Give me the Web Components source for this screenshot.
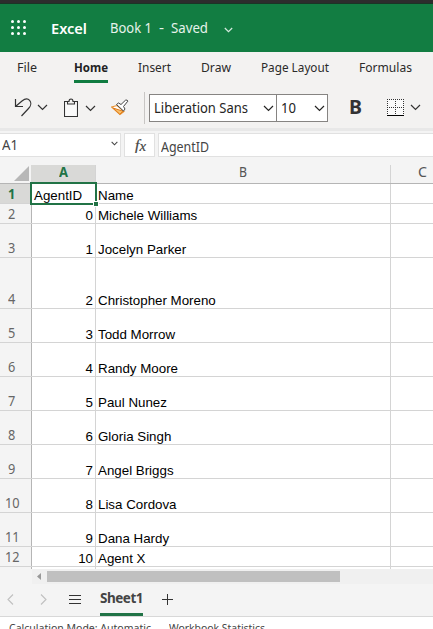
<!DOCTYPE html>
<html lang="en">
<head>
<meta charset="utf-8">
<title>Book 1 - Excel</title>
<style>
html,body{margin:0;height:100%;overflow:hidden}
body{font-family:"Noto Sans","Open Sans",sans-serif;background:#f3f2f1}
</style>
</head>
<body>
<excel-app></excel-app>
<script>
const define=(name,html,init)=>customElements.define(name,class extends HTMLElement{
  connectedCallback(){
    if(this.shadowRoot)return;
    const root=this.attachShadow({mode:'open'});
    const t=document.createElement('template');
    t.innerHTML=typeof html==='function'?html(this):html;
    root.append(t.content.cloneNode(true));
    if(init)init(this,root);
  }
});

// A single line of text, condensed or expanded to the width in its "w" attribute.
define('fit-label',`<style>
:host{display:block;flex:none;white-space:nowrap}
span{display:inline-block;transform-origin:0 50%}
</style><span><slot></slot></span>`,(el,root)=>{
  const s=root.querySelector('span'),w=+el.getAttribute('w');
  el.style.width=w+'px';
  const n=s.getBoundingClientRect().width;
  if(n)s.style.transform=`scaleX(${w/n})`;
});

define('chevron-down',el=>`<style>:host{display:block;flex:none;line-height:0}svg{display:block}</style>
<svg width="${el.getAttribute('w')||11}" height="${el.getAttribute('h')||7}" viewBox="0 0 11 7" fill="none" stroke="currentColor" stroke-width="${el.getAttribute('sw')||1.2}"><path d="M1 1l4.5 4.5L10 1"/></svg>`);

define('title-bar',`<style>
:host{display:flex;height:48px;border-top:4px solid #2d2d2d;background:#127d42;background-clip:padding-box;color:#fff;box-sizing:content-box;align-items:center;padding-left:11px;position:relative}
:host::before{content:"";position:absolute;left:0;right:0;top:-1px;height:1px;background:#1b3526}
fit-label{line-height:24px}
.app{font:600 15px/24px "Noto Sans",sans-serif;margin-left:24px}
.doc{font-size:14px;margin-left:23px;color:#e6f2eb}
.dash{font-size:14px;margin-left:7px;color:#e6f2eb}
.saved{font-size:14px;margin-left:7px;color:#e6f2eb}
chevron-down{margin:3px 0 0 16px;color:#d5eade}
</style>
<svg width="16" height="16" viewBox="0 0 16 16" fill="#fff"><circle cx="1.5" cy="1.5" r="1.5"/><circle cx="7.5" cy="1.5" r="1.5"/><circle cx="13.5" cy="1.5" r="1.5"/><circle cx="1.5" cy="7.5" r="1.5"/><circle cx="7.5" cy="7.5" r="1.5"/><circle cx="13.5" cy="7.5" r="1.5"/><circle cx="1.5" cy="13.5" r="1.5"/><circle cx="7.5" cy="13.5" r="1.5"/><circle cx="13.5" cy="13.5" r="1.5"/></svg>
<fit-label class="app" w="36">Excel</fit-label>
<fit-label class="doc" w="42">Book 1</fit-label><fit-label class="dash" w="5">-</fit-label><fit-label class="saved" w="37">Saved</fit-label>
<chevron-down w="9" h="6" sw="1.5"></chevron-down>`);

define('ribbon-tab',el=>`<style>
:host{display:block;flex:none;font-size:13px;color:#2b2a29}
fit-label{line-height:20px;height:23px;border-bottom:3px solid transparent}
:host([active]) fit-label{font-weight:700;border-color:#107c41;color:#222}
</style><fit-label w="${el.getAttribute('w')}">${el.getAttribute('label')}</fit-label>`);

define('ribbon-tabs',`<style>
:host{display:grid;grid-template-columns:57px 64px 63px 60px 98px auto;height:33px;padding-left:17px;background:#f3f2f1;align-items:end;box-sizing:border-box}
ribbon-tab{margin-bottom:2px}
</style>
<ribbon-tab label="File" w="20"></ribbon-tab><ribbon-tab label="Home" w="34" active></ribbon-tab><ribbon-tab label="Insert" w="33"></ribbon-tab><ribbon-tab label="Draw" w="30"></ribbon-tab><ribbon-tab label="Page Layout" w="68"></ribbon-tab><ribbon-tab label="Formulas" w="53"></ribbon-tab>`);

define('combo-box',`<style>
:host{display:flex;box-sizing:border-box;height:28px;border:1px solid #868482;background:#fff;align-items:center;justify-content:space-between;padding:0 2px 0 4px;font-size:14px;line-height:26px;color:#252423}
</style><slot></slot><chevron-down></chevron-down>`);

define('tool-bar',`<style>
:host{display:flex;height:43px;background:#f3f2f1;color:#333;align-items:flex-start}
svg{display:block;flex:none}
chevron-down{margin-top:19px}
.undo{margin:12px 0 0 14px}.clip{margin:13px 0 0 16px}.brush{margin:14px 0 0 15px}
.sep{width:1px;height:32px;background:#c8c6c4;margin:7px 4px 0 13px}
combo-box{margin-top:9px}
.font{width:128px}.size{width:52px;margin-left:-1px}
.bold{font:700 20px/27px "Noto Sans",sans-serif;margin:8px 0 0 21px}
.border{margin:14px 0 0 25px}
</style>
<svg class="undo" width="18" height="22" viewBox="0 0 18 22" fill="none" stroke="#333" stroke-width="1.2"><path d="M1.500 2v7.500H9M1.500 9.500L8 4c3-2.500 6-2.500 7.600-.7C17.500 5.500 17 9 14.500 11.500L7.500 19"/></svg>
<chevron-down style="margin-left:5px"></chevron-down>
<svg class="clip" width="14" height="20" viewBox="0 0 14 20" fill="none" stroke="#333" stroke-width="1.1"><path fill="#fafafa" d="M.5 3.500h13v15H.5z"/><path fill="#f3f2f1" d="M3.500 6V3.500H5C5 .2 9 .2 9 3.500h1.500V6z"/></svg>
<chevron-down style="margin-left:7px;margin-top:20px"></chevron-down>
<svg class="brush" width="20" height="18" viewBox="0 0 20 18"><path d="M.5 8L6 6.500 13 12.500 9 15.500z" fill="#fff" stroke="#e8902e" stroke-width="1.100"/><path d="M2 9l10 3.200L8.800 15.200z" fill="#f8c16c" stroke="#e07a18" stroke-width="1"/><path d="M5.500 5.500l2-1.500 2.500 1.500L14.500 1.200q2-.8 2.300 1L12.500 7.500l1.500 2.500-1.500 2z" fill="#fff" stroke="#444" stroke-width="1"/></svg>
<div class="sep"></div>
<combo-box class="font"><fit-label w="94">Liberation Sans</fit-label></combo-box>
<combo-box class="size"><fit-label w="15">10</fit-label></combo-box>
<fit-label class="bold" w="13">B</fit-label>
<svg class="border" width="17" height="17" viewBox="0 0 17 17" fill="none" stroke="#333"><rect width="17" height="16" fill="#fafafa" stroke="none"/><path stroke-dasharray="1 1" d="M0 .5h17M0 8.500h17M.5 0v16M8.500 0v16M16.500 0v16"/><path stroke="#000" d="M0 16.500h17"/></svg>
<chevron-down style="margin-left:6px"></chevron-down>`);

define('formula-bar',`<style>
:host{display:flex;height:37px;box-sizing:border-box;border-top:3px solid #e8e8e8;background:#f4f4f4;padding-top:2px;gap:3px;color:#444}
div{box-sizing:border-box;height:24px;background:#fff;border:1px solid #e1e1e1;display:flex;align-items:center;font-size:14px;line-height:20px}
.name{width:121px;border-left:0;padding:0 2px 0 2px;justify-content:space-between}
.fx{width:31px;padding-left:10px}
.val{flex:1;padding:4px 0 0 2px;border-right:0}
chevron-down{margin-top:-4px}
i{font:italic 400 15px/20px "Liberation Serif",serif;-webkit-text-stroke:.2px #444}
i span{font-size:14px;position:relative;top:1px}
</style>
<div class="name"><fit-label w="16">A1</fit-label><chevron-down w="7" h="5" sw="1.7"></chevron-down></div>
<div class="fx"><fit-label w="11"><i>f<span>x</span></i></fit-label></div>
<div class="val"><fit-label w="48">AgentID</fit-label></div>`);

define('column-headers',`<style>
:host{display:grid;grid-template-columns:31px 65px 295px 1fr;height:19px;box-sizing:border-box;border-bottom:1px solid #b5b5b5;background:#f4f4f4;color:#555;font-size:14px;line-height:14px;text-align:center}
div{border-right:1px solid #d4d4d4;display:flex;justify-content:center}
.corner{border:0;justify-content:flex-end;align-items:flex-end;padding:0 2px 2px 0}
.a{background:#d9d9d7;color:#217346;font-weight:700}
.c{border:0;justify-content:flex-start;padding-left:27px}
</style>
<div class="corner"><svg width="15" height="15"><path d="M15 0v15H0z" fill="#b7b7b7"/></svg></div>
<div class="a"><fit-label w="9">A</fit-label></div><div><fit-label w="8">B</fit-label></div><div class="c"><fit-label w="9">C</fit-label></div>`);

define('sheet-row',el=>{const n=el.getAttribute('n');return `<style>
:host{display:grid;grid-template-columns:31px 65px 295px 1fr;height:${el.getAttribute('h')}px;background:#fff;color:#000;font:13.33px/15px "Liberation Sans",sans-serif}
div{border-bottom:1px solid #d4d4d4;border-right:1px solid #d4d4d4;display:flex;align-items:flex-end;box-sizing:border-box;padding:0 2px;min-width:0}
.h{background:#f4f4f4;border-right:1px solid #b5b5b5;width:32px;color:#666;font:14px/19px "Noto Sans",sans-serif;justify-content:center;padding:0 7px 0 0}
.a{justify-content:flex-end;padding-left:3px}
:host([active]) .h{background:#d9d9d7;color:#217346;font-weight:700}
:host([active]) .a{justify-content:flex-start}
.last{border-right:0}
</style>
<div class="h"><fit-label w="${n.length*7.3}">${n}</fit-label></div><div class="a">${el.getAttribute('a')}</div><div>${el.getAttribute('b')}</div><div class="last"></div>`});

define('sheet-grid',()=>{
  const rows=[[20,'AgentID','Name'],[20,'0','Michele Williams'],[34,'1','Jocelyn Parker'],[51,'2','Christopher Moreno'],[34,'3','Todd Morrow'],[34,'4','Randy Moore'],[34,'5','Paul Nunez'],[34,'6','Gloria Singh'],[34,'7','Angel Briggs'],[34,'8','Lisa Cordova'],[34,'9','Dana Hardy'],[20,'10','Agent X'],[20,'','']];
  return `<style>
:host{display:block;height:385px;position:relative}
.sel{position:absolute;left:30px;top:-2px;width:63px;height:19px;border:2px solid #217346;pointer-events:none}
.body{height:385px;overflow:hidden}
.sel::after{content:"";position:absolute;right:-3px;bottom:-3px;width:4px;height:4px;background:#217346;outline:1px solid #fff}
</style><div class="body">`+rows.map((r,i)=>`<sheet-row n="${i<12?i+1:''}" h="${r[0]}" a="${r[1]}" b="${r[2]}"${i?'':' active'}></sheet-row>`).join('')+`</div><div class="sel"></div>`});

define('scroll-bar',`<style>
:host{display:flex;height:15px;background:#f0f0f0;border-left:32px solid #f4f4f4;align-items:center}
svg{margin:0 6px 0 5px}
div{width:293px;height:11px;background:#c0c0c0}
</style><svg width="4" height="7"><path d="M4 0v7L0 3.500z" fill="#999"/></svg><div></div>`);

define('sheet-bar',`<style>
:host{display:flex;height:33px;box-sizing:border-box;border-bottom:1px solid #d8d8d8;background:#f4f4f4;align-items:flex-start}
svg{flex:none}
.tab{font:700 14px/22px "Noto Sans",sans-serif;color:#444;height:29px;border-bottom:3px solid #217346;margin:0 19px 0 18px;letter-spacing:-.5px}
.tab fit-label{padding-top:3px}
</style>
<svg width="82" height="32" fill="none"><path stroke="#c0c0c0" stroke-width="1.100" d="M13 10.500L8 15.500l5 5M41 10.500l5 5-5 5"/><path stroke="#333" stroke-width="1" d="M69 11.500h12M69 15.500h12M69 19.500h12"/></svg>
<div class="tab"><fit-label w="43">Sheet1</fit-label></div>
<svg width="12" height="32"><path stroke="#333" d="M0 15.500h11M5.500 10v11"/></svg>`);

define('status-bar',`<style>
:host{display:flex;gap:18px;height:12px;overflow:hidden;background:#fff;color:#444;font-size:11px;line-height:16px;padding:3px 0 0 9px;box-sizing:border-box}
</style><fit-label w="142">Calculation Mode: Automatic</fit-label><fit-label w="96">Workbook Statistics</fit-label>`);

define('excel-app',`<style>
:host{display:flex;flex-direction:column;width:433px;height:629px;overflow:hidden;background:#f4f4f4}
:host>*{flex:none}
</style>
<title-bar></title-bar><ribbon-tabs></ribbon-tabs><tool-bar></tool-bar><formula-bar></formula-bar><column-headers></column-headers><sheet-grid></sheet-grid><scroll-bar></scroll-bar><sheet-bar></sheet-bar><status-bar></status-bar>`);
</script>
</body>
</html>
